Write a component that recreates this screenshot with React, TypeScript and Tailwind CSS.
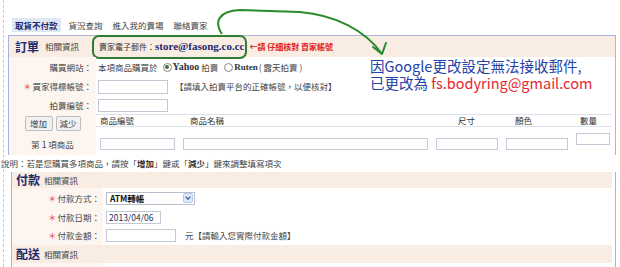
import React from "react";

const LBL = "w-[87px] bg-[#fdf6f0] flex items-center justify-end pr-[4px] shrink-0";
const PLBL = "w-[91px] bg-[#fdf6f0] flex items-center justify-end pr-[3px] shrink-0";
const INPUT = "border border-[#c4c8d6] bg-white";
const COLS = "grid grid-cols-[83px_253px_70px_70px_40px]";

function Req() {
  return <span className="text-[#e23a3a] mr-[1px]">＊</span>;
}

export default function App() {
  return (
    <div className="relative w-[620px] h-[267px] overflow-hidden bg-white text-[#444] font-['Noto_Sans_CJK_TC','Noto_Sans',sans-serif] text-[8.5px] leading-none">
      <div className="absolute left-[3px] top-0 bottom-0 border-l border-dashed border-[#c8c8c8]" />

      {/* tabs */}
      <div className="flex items-center pt-[18px] pl-[12px] h-[32px]">
        <div className="h-[14px] px-[3px] bg-[#dfe7f5] flex items-center font-bold text-[#1b2a6b]">取貨不付款</div>
        <div className="ml-[8px]">貨況查詢</div>
        <div className="ml-[10px]">進入我的賣場</div>
        <div className="ml-[10px]">聯絡賣家</div>
      </div>

      {/* order panel */}
      <div className="mt-[3px] ml-[8px] w-[608px] border-x border-t border-[#aeb2e0]">
        <div className="h-[21px] bg-[#f8ece3] flex items-center pl-[6px]">
          <span className="text-[12px] font-bold text-[#1b2a6b]">訂單</span>
          <span className="ml-[6px]">相關資訊</span>
          <div className="ml-[13px] h-[24px] shrink-0 border-2 border-[#2f7d32] rounded-[7px] flex items-center pl-[5px] pr-[1px] bg-[#f8ece3]">
            <span className="text-[8px] text-[#333]">賣家電子郵件：</span>
            <span className="font-['Liberation_Serif',serif] font-bold text-[11px] text-[#1b2a6b]">store@fasong.co.cc</span>
          </div>
          <span className="ml-[2px] text-[8px] font-bold text-[#e21b1b]">←請 仔細核對 賣家帳號</span>
        </div>

        <div className="flex h-[20px]">
          <div className={LBL}>購買網站：</div>
          <div className="flex items-center pl-[2px]">
            <span>本項商品購買於</span>
            <span className="ml-[5px] w-[9px] h-[9px] rounded-full border border-[#7a8a7a] flex items-center justify-center">
              <span className="w-[4px] h-[4px] rounded-full bg-[#4a6a4a]" />
            </span>
            <span className="ml-[1px] font-['Liberation_Serif',serif] font-bold text-[10px] text-[#333]">Yahoo</span>
            <span className="ml-[2px]">拍賣</span>
            <span className="ml-[6px] w-[9px] h-[9px] rounded-full border border-[#8a8a8a]" />
            <span className="ml-[1px] font-['Liberation_Serif',serif] font-bold text-[9px] text-[#333]">Ruten</span>
            <span className="ml-[1px]">( 露天拍賣 )</span>
          </div>
        </div>

        <div className="flex h-[19px]">
          <div className={LBL}><Req />買家得標帳號：</div>
          <div className="flex items-center pl-[2px]">
            <div className={`w-[70px] h-[14px] ${INPUT}`} />
            <span className="ml-[7px]">【請填入拍賣平台的正確帳號，以便核對】</span>
          </div>
        </div>

        <div className="flex h-[18px]">
          <div className={LBL}>拍賣編號：</div>
          <div className="flex items-center pl-[2px]">
            <div className={`w-[70px] h-[13px] ${INPUT}`} />
          </div>
        </div>

        <div className="flex h-[19px]">
          <div className="w-[87px] bg-[#fdf6f0] flex items-center justify-center gap-[3px] shrink-0">
            <button className="w-[28px] h-[15px] border border-[#bdbdbd] bg-[#f1f1f1] text-[8.5px] text-[#444] rounded-[2px]">增加</button>
            <button className="w-[25px] h-[15px] border border-[#bdbdbd] bg-[#f1f1f1] text-[8.5px] text-[#444] rounded-[2px]">減少</button>
          </div>
          <div className={`${COLS} h-[13px] border-y border-[#dde1ee] items-center text-[#333]`}>
            <div className="pl-[4px]">商品編號</div>
            <div className="pl-[11px]">商品名稱</div>
            <div className="pl-[26px]">尺寸</div>
            <div className="pl-[13px]">顏色</div>
            <div className="pl-[8px]">數量</div>
          </div>
        </div>

        <div className="flex h-[22px]">
          <div className="w-[87px] bg-[#fdf6f0] flex items-center justify-center shrink-0">第 1 項商品</div>
          <div className={`${COLS} items-start`}>
            <div className="pl-[4px] pt-[5px]"><div className={`w-[75px] h-[12px] ${INPUT}`} /></div>
            <div className="pl-[4px] pt-[5px]"><div className={`w-[245px] h-[12px] ${INPUT}`} /></div>
            <div className="pl-[4px] pt-[5px]"><div className={`w-[62px] h-[12px] ${INPUT}`} /></div>
            <div className="pl-[4px] pt-[5px]"><div className={`w-[62px] h-[12px] ${INPUT}`} /></div>
            <div className="pl-[4px]"><div className={`w-[34px] h-[12px] ${INPUT}`} /></div>
          </div>
        </div>
      </div>

      {/* note */}
      <div className="h-[17px] flex items-center pl-[1px]">
        說明：若是您購買多項商品，請按「<b className="text-[#333]">增加</b>」鍵或「<b className="text-[#333]">減少</b>」鍵來調整填寫項次
      </div>

      {/* payment panel */}
      <div className="ml-[11px] w-[605px] border-x border-[#aeb2e0]">
        <div className="h-[16px] mr-[3px] bg-[#f8ece3] flex items-center pl-[4px]">
          <span className="text-[12px] font-bold text-[#1b2a6b]">付款</span>
          <span className="ml-[4px]">相關資訊</span>
        </div>

        <div className="flex h-[20px]">
          <div className={PLBL}><Req />付款方式：</div>
          <div className="flex items-center pl-[3px]">
            <div className="w-[89px] h-[13px] border border-[#b9bdcc] flex items-center justify-between pl-[3px] pr-[1px]">
              <span className="font-bold text-[#111]">ATM轉帳</span>
              <div className="w-[10px] h-[10px] rounded-[2px] bg-[#dfe8f7] border border-[#b8c8e6] flex items-center justify-center">
                <svg width="6" height="4" viewBox="0 0 6 4">
                  <path d="M0.6 0.6 L3 3.2 L5.4 0.6" stroke="#3b5bab" strokeWidth="1.3" fill="none" />
                </svg>
              </div>
            </div>
          </div>
        </div>

        <div className="flex h-[18px]">
          <div className={PLBL}><Req />付款日期：</div>
          <div className="flex items-center pl-[3px]">
            <div className={`w-[55px] h-[13px] ${INPUT} flex items-center pl-[2px] text-[#2a2f5a]`}>2013/04/06</div>
          </div>
        </div>

        <div className="flex h-[19px]">
          <div className={PLBL}><Req />付款金額：</div>
          <div className="flex items-center pl-[3px]">
            <div className={`w-[70px] h-[13px] ${INPUT}`} />
            <span className="ml-[9px]">元【請輸入您實際付款金額】</span>
          </div>
        </div>

        <div className="h-[18px] mr-[3px] bg-[#f8ece3] flex items-center pl-[4px]">
          <span className="text-[12px] font-bold text-[#1b2a6b]">配送</span>
          <span className="ml-[4px]">相關資訊</span>
        </div>
        <div className="flex h-[20px]">
          <div className={PLBL} />
          <div />
        </div>
      </div>

      {/* annotation arrow */}
      <svg className="absolute left-0 top-0 pointer-events-none" width="620" height="267" viewBox="0 0 620 267">
        <path
          d="M222 34 C214 22 218 11 240 10 L300 12 C335 15 365 30 382 54"
          stroke="#2a8a2e"
          strokeWidth="2"
          fill="none"
        />
        <path d="M373 47 L382 54 L386 43" stroke="#2a8a2e" strokeWidth="2" fill="none" strokeLinecap="round" strokeLinejoin="round" />
      </svg>

      {/* annotation text */}
      <div className="absolute left-[370px] top-[57px] text-[14.5px] leading-[17px] text-[#2442a8] whitespace-nowrap">
        <div>因Google更改設定無法接收郵件,</div>
        <div>
          已更改為 <span className="text-[#e6262e]">fs.bodyring@gmail.com</span>
        </div>
      </div>
    </div>
  );
}
